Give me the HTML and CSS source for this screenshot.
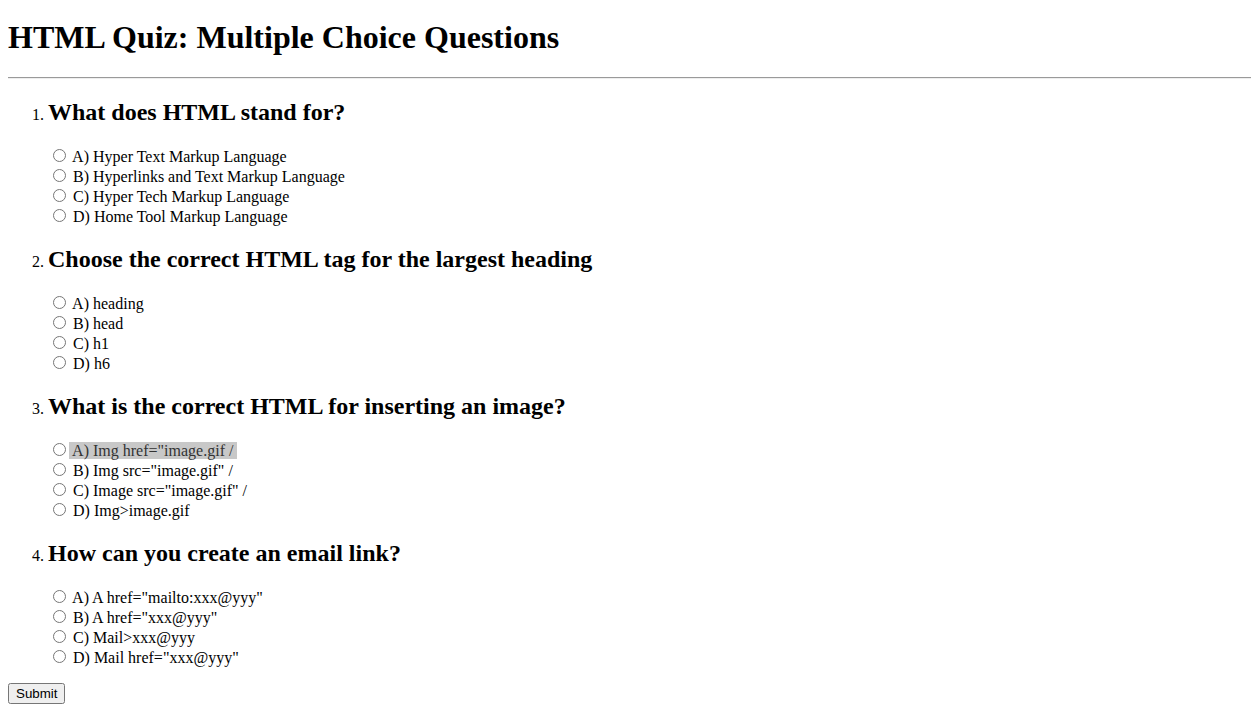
FILE: index.html
```html
<!DOCTYPE html>
<html>
<head>
<meta charset="utf-8">
<title>HTML Quiz</title>
<link rel="stylesheet" href="styles.css">
</head>
<body>
<h1 class="title">HTML Quiz: Multiple Choice Questions</h1>
<hr class="rule">
<form class="quiz">
<ol class="questions">
<li class="question">
<h2 class="q-title">What does HTML stand for?</h2>
<label class="opt"><input type="radio" name="q1"> A) Hyper Text Markup Language</label>
<label class="opt"><input type="radio" name="q1"> B) Hyperlinks and Text Markup Language</label>
<label class="opt"><input type="radio" name="q1"> C) Hyper Tech Markup Language</label>
<label class="opt"><input type="radio" name="q1"> D) Home Tool Markup Language</label>
</li>
<li class="question">
<h2 class="q-title">Choose the correct HTML tag for the largest heading</h2>
<label class="opt"><input type="radio" name="q2"> A) heading</label>
<label class="opt"><input type="radio" name="q2"> B) head</label>
<label class="opt"><input type="radio" name="q2"> C) h1</label>
<label class="opt"><input type="radio" name="q2"> D) h6</label>
</li>
<li class="question">
<h2 class="q-title">What is the correct HTML for inserting an image?</h2>
<label class="opt"><input type="radio" name="q3"><span class="hl"> A) Img href="image.gif / </span></label>
<label class="opt"><input type="radio" name="q3"> B) Img src="image.gif" /</label>
<label class="opt"><input type="radio" name="q3"> C) Image src="image.gif" /</label>
<label class="opt"><input type="radio" name="q3"> D) Img&gt;image.gif</label>
</li>
<li class="question">
<h2 class="q-title">How can you create an email link?</h2>
<label class="opt"><input type="radio" name="q4"> A) A href="mailto:xxx@yyy"</label>
<label class="opt"><input type="radio" name="q4"> B) A href="xxx@yyy"</label>
<label class="opt"><input type="radio" name="q4"> C) Mail&gt;xxx@yyy</label>
<label class="opt"><input type="radio" name="q4"> D) Mail href="xxx@yyy"</label>
</li>
</ol>
<button type="button" class="submit">Submit</button>
</form>
</body>
</html>
```
FILE: styles.css
```css
body {
  margin: 8px 0 8px 8px;
  font-family: "Liberation Serif", "Times New Roman", serif;
  font-size: 16px;
  color: #000;
  background: #fff;
}
.title {
  font-size: 32px;
  font-weight: bold;
  margin: 11px 0 21px;
}
.rule {
  border-style: solid;
  border-width: 1px 0;
  border-top-color: #9a9a9a;
  border-bottom-color: #eeeeee;
  height: 0;
  margin: 8px 0;
}
.questions {
  padding-left: 40px;
  margin: 16px 0;
}
.question {
  font-size: 16px;
}
.q-title {
  font-size: 24px;
  font-weight: bold;
  margin: 20px 0;
}
.opt {
  display: block;
}
.opt input {
  margin: 3px 3px 0 5px;
}
.hl {
  background: #c8c8c8;
  color: #333;
  white-space: pre;
}
.submit {
  font-family: "Liberation Sans", Arial, sans-serif;
  font-size: 13.33px;
}
```
